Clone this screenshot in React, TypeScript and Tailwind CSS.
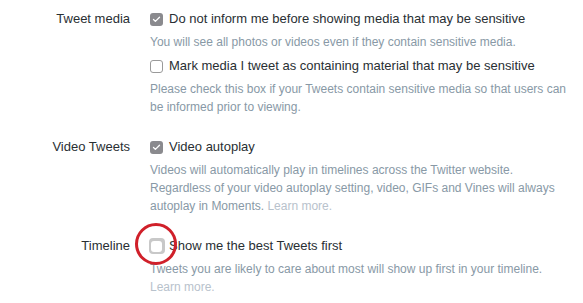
import { Check } from "lucide-react"

const font = { fontFamily: '"Liberation Sans", Arial, sans-serif' }

function Box({ checked, focus }: { checked?: boolean; focus?: boolean }) {
  if (checked) {
    return (
      <span className="flex h-[13px] w-[13px] shrink-0 items-center justify-center rounded-[3px] bg-[#8a8a8e]">
        <Check className="h-[9px] w-[9px] text-white" strokeWidth={3.5} />
      </span>
    )
  }
  if (focus) {
    return (
      <span className="-mx-[1.5px] flex h-[16px] w-[16px] shrink-0 items-center justify-center rounded-[4px] bg-[#c8c8c8]">
        <span className="h-[11px] w-[11px] rounded-[3px] bg-white" />
      </span>
    )
  }
  return <span className="h-[13px] w-[13px] shrink-0 rounded-[3px] border border-[#9a9a9a] bg-white" />
}

function Option({
  label,
  checked,
  focus,
  children,
}: {
  label: string
  checked?: boolean
  focus?: boolean
  children: React.ReactNode
}) {
  return (
    <div>
      <label className="flex h-[22px] items-center gap-[6px] text-[13px] text-[#292f33]">
        <Box checked={checked} focus={focus} />
        <span>{label}</span>
      </label>
      <p className="mt-[3px] text-[12px] leading-[18px] text-[#8899a6]">{children}</p>
    </div>
  )
}

function Row({ title, children }: { title: string; children: React.ReactNode }) {
  return (
    <div className="grid grid-cols-[130px_1fr] gap-x-[20px]">
      <div className="h-[22px] text-right text-[13px] leading-[22px] text-[#292f33]">{title}</div>
      <div className="flex flex-col gap-[4px]">{children}</div>
    </div>
  )
}

export default function App() {
  return (
    <div className="relative h-[303px] w-[583px] overflow-hidden bg-white pt-[8px]" style={font}>
      <div className="flex flex-col gap-[20px]">
        <Row title="Tweet media">
          <Option label="Do not inform me before showing media that may be sensitive" checked>
            You will see all photos or videos even if they contain sensitive media.
          </Option>
          <Option label="Mark media I tweet as containing material that may be sensitive">
            Please check this box if your Tweets contain sensitive media so that users can
            <br />
            be informed prior to viewing.
          </Option>
        </Row>
        <Row title="Video Tweets">
          <Option label="Video autoplay" checked>
            Videos will automatically play in timelines across the Twitter website.
            <br />
            Regardless of your video autoplay setting, video, GIFs and Vines will always
            <br />
            autoplay in Moments. <span className="text-[#b8c2cc]">Learn more.</span>
          </Option>
        </Row>
        <Row title="Timeline">
          <Option label="Show me the best Tweets first" focus>
            Tweets you are likely to care about most will show up first in your timeline.
            <br />
            <span className="text-[#b8c2cc]">Learn more.</span>
          </Option>
        </Row>
      </div>
      {/* red highlight circle */}
      <div className="absolute left-[135px] top-[223px] h-[42px] w-[42px] rounded-full border-[3px] border-[#d0202a]" />
    </div>
  )
}
